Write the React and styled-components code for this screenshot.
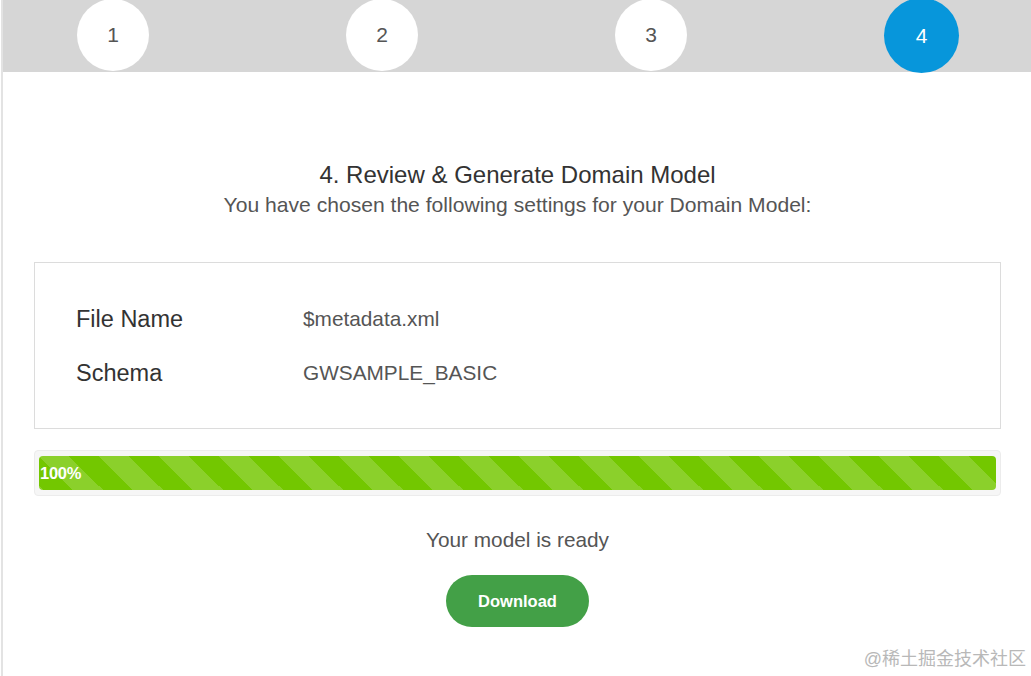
import React from 'react'
import styled, { createGlobalStyle } from 'styled-components'

const GlobalStyle = createGlobalStyle`
  html, body {
    margin: 0;
    padding: 0;
    background: #fff;
    font-family: "Liberation Sans", Arial, sans-serif;
  }
`;

const Page = styled.div`
  margin-left: 1px;
  width: 1034px;
  height: 676px;
  border-left: 2px solid #e3e3e3;
  box-sizing: border-box;
  position: relative;
  overflow: hidden;
`;

const StepBar = styled.div`
  height: 72px;
  background: #d6d6d6;
  display: flex;
  justify-content: center;
  align-items: center;
  gap: 197px;
  padding-right: 2px;
`;

const StepCircle = styled.div`
  width: ${p => (p.$active ? 75 : 72)}px;
  height: ${p => (p.$active ? 75 : 72)}px;
  margin-top: ${p => (p.$active ? -1 : -2)}px;
  flex-shrink: 0;
  border-radius: 50%;
  background: ${p => (p.$active ? '#0796db' : '#fff')};
  color: ${p => (p.$active ? '#fff' : '#555')};
  display: flex;
  align-items: center;
  justify-content: center;
  font-size: 21px;
`;

const Content = styled.div`
  padding: 89px 34px 0 31px;
  display: flex;
  flex-direction: column;
  align-items: center;
`;

const Title = styled.h2`
  margin: 0;
  font-size: 24px;
  font-weight: normal;
  color: #333;
  line-height: 28px;
`;

const Subtitle = styled.p`
  margin: 4px 0 0;
  font-size: 21.1px;
  color: #555;
  line-height: 24px;
`;

const SettingsCard = styled.div`
  align-self: stretch;
  margin-top: 45px;
  height: 167px;
  border: 1px solid #dcdcdc;
  box-sizing: border-box;
  padding: 44px 0 0 41px;
  display: grid;
  grid-template-columns: 227px 1fr;
  row-gap: 30px;
  grid-auto-rows: 24px;
  align-items: center;
`;

const Label = styled.div`
  font-size: 23.5px;
  color: #333;
`;

const Value = styled.div`
  font-size: 20.8px;
  color: #555;
`;

const ProgressTrack = styled.div`
  align-self: stretch;
  margin-top: 21px;
  height: 46px;
  box-sizing: border-box;
  padding: 5px 4px;
  background: #f6f6f6;
  border: 1px solid #ececec;
  border-radius: 4px;
`;

const ProgressFill = styled.div`
  height: 100%;
  border-radius: 4px;
  background-color: #73c700;
  background-image: linear-gradient(
    45deg,
    rgba(255, 255, 255, 0.17) 25%,
    transparent 25%,
    transparent 50%,
    rgba(255, 255, 255, 0.17) 50%,
    rgba(255, 255, 255, 0.17) 75%,
    transparent 75%,
    transparent
  );
  background-size: 60px 60px;
  display: flex;
  align-items: center;
  padding-left: 1px;
  box-sizing: border-box;
  color: #fff;
  font-size: 16.5px;
  font-weight: bold;
  letter-spacing: -0.3px;
`;

const Status = styled.p`
  margin: 32px 0 0;
  font-size: 20.8px;
  line-height: 24px;
  color: #555;
`;

const DownloadButton = styled.button`
  margin-top: 23px;
  width: 143px;
  height: 52px;
  border: none;
  border-radius: 26px;
  background: #43a047;
  color: #fff;
  font-family: "Liberation Sans", Arial, sans-serif;
  font-size: 16.5px;
  font-weight: bold;
  cursor: pointer;
`;

const Watermark = styled.div`
  position: absolute;
  right: 9px;
  bottom: 6px;
  font-size: 18px;
  color: #b8b8b8;
  font-family: "Liberation Sans", "Noto Sans CJK SC", sans-serif;
`;

const steps = [1, 2, 3, 4];

const settings = [
  { label: 'File Name', value: '$metadata.xml' },
  { label: 'Schema', value: 'GWSAMPLE_BASIC' },
];

const App = () => {
  const current = 4;

  return (
    <>
      <GlobalStyle />
      <Page>
        <StepBar>
          {steps.map(s => (
            <StepCircle key={s} $active={s === current}>{s}</StepCircle>
          ))}
        </StepBar>
        <Content>
          <Title>4. Review &amp; Generate Domain Model</Title>
          <Subtitle>You have chosen the following settings for your Domain Model:</Subtitle>
          <SettingsCard>
            {settings.map(item => (
              <React.Fragment key={item.label}>
                <Label>{item.label}</Label>
                <Value>{item.value}</Value>
              </React.Fragment>
            ))}
          </SettingsCard>
          <ProgressTrack>
            <ProgressFill style={{ width: '100%' }}>100%</ProgressFill>
          </ProgressTrack>
          <Status>Your model is ready</Status>
          <DownloadButton>Download</DownloadButton>
        </Content>
        <Watermark>@稀土掘金技术社区</Watermark>
      </Page>
    </>
  )
}

export default App
